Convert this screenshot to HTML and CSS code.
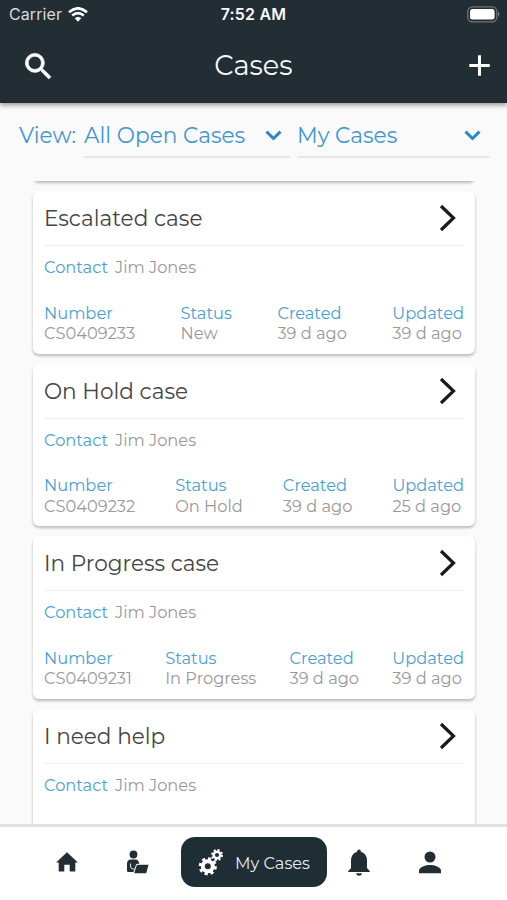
FILE: index.html
```html
<!DOCTYPE html>
<html lang="en">
<head>
<meta charset="utf-8">
<title>Cases</title>
<link rel="stylesheet" href="styles.css">
</head>
<body>
<div class="app">
  <header class="header">
    <div class="statusbar">
      <div class="carrier"><span>Carrier</span>
        <svg width="20" height="15" viewBox="0 0 20 15" fill="none" stroke="#fff" stroke-width="2.6"><path d="M1 5.2Q10-2.6 19 5.2M4.2 8.6Q10 3.7 15.8 8.6"/><path d="M6.7 11.2Q10 8.2 13.3 11.2L10 14.7Z" fill="#fff" stroke="none"/></svg>
      </div>
      <span class="time">7:52 AM</span>
      <svg class="battery" width="33" height="17" viewBox="0 0 33 17"><rect x=".8" y=".8" width="29" height="15" rx="4.5" fill="none" stroke="#6b7479" stroke-width="1.3"/><rect x="3" y="3" width="24.6" height="10.6" rx="2.4" fill="#fff"/><path d="M31 5.5q2.6 2.7 0 5.4z" fill="#7b8388"/></svg>
    </div>
    <div class="titlebar">
      <svg class="search" width="35" height="35" viewBox="0 0 24 24" fill="#fff" stroke="#fff" stroke-width=".5"><path d="M15.5 14h-.79l-.28-.27A6.47 6.47 0 0 0 16 9.5 6.5 6.5 0 1 0 9.5 16c1.61 0 3.09-.59 4.23-1.57l.27.28v.79l5 4.99L20.490 19l-4.990-5zm-6 0C7.010 14 5 11.990 5 9.500S7.010 5 9.500 5 14 7.010 14 9.500 11.990 14 9.500 14z"/></svg>
      <h1>Cases</h1>
      <svg class="plus" width="22" height="22" viewBox="0 0 22 22" stroke="#fff" stroke-width="3"><path d="M11.500 .3v20.400M1.300 10.500h20.400"/></svg>
    </div>
  </header>

  <div class="filters">
    <span class="view">View:</span>
    <div class="select open"><span>All Open Cases</span><svg width="17" height="11" viewBox="0 0 17 11"><path d="M1.500 1.700l7 6.800 7-6.800"/></svg></div>
    <div class="select mine"><span>My Cases</span><svg width="17" height="11" viewBox="0 0 17 11"><path d="M1.500 1.700l7 6.800 7-6.800"/></svg></div>
  </div>

  <main class="list">
    <div class="card tail"></div>
    <article class="card">
      <div class="head"><h2>Escalated case</h2><svg class="go" width="17" height="28" viewBox="0 0 17 28"><path d="M2 2l12.500 12L2 26"/></svg></div>
      <p class="contact"><b>Contact</b><span>Jim Jones</span></p>
      <div class="facts">
        <div><b>Number</b><span>CS0409233</span></div>
        <div><b>Status</b><span>New</span></div>
        <div><b>Created</b><span>39 d ago</span></div>
        <div><b>Updated</b><span>39 d ago</span></div>
      </div>
    </article>
    <article class="card">
      <div class="head"><h2>On Hold case</h2><svg class="go" width="17" height="28" viewBox="0 0 17 28"><path d="M2 2l12.500 12L2 26"/></svg></div>
      <p class="contact"><b>Contact</b><span>Jim Jones</span></p>
      <div class="facts">
        <div><b>Number</b><span>CS0409232</span></div>
        <div><b>Status</b><span>On Hold</span></div>
        <div><b>Created</b><span>39 d ago</span></div>
        <div><b>Updated</b><span>25 d ago</span></div>
      </div>
    </article>
    <article class="card">
      <div class="head"><h2>In Progress case</h2><svg class="go" width="17" height="28" viewBox="0 0 17 28"><path d="M2 2l12.500 12L2 26"/></svg></div>
      <p class="contact"><b>Contact</b><span>Jim Jones</span></p>
      <div class="facts">
        <div><b>Number</b><span>CS0409231</span></div>
        <div><b>Status</b><span>In Progress</span></div>
        <div><b>Created</b><span>39 d ago</span></div>
        <div><b>Updated</b><span>39 d ago</span></div>
      </div>
    </article>
    <article class="card">
      <div class="head"><h2>I need help</h2><svg class="go" width="17" height="28" viewBox="0 0 17 28"><path d="M2 2l12.500 12L2 26"/></svg></div>
      <p class="contact"><b>Contact</b><span>Jim Jones</span></p>
    </article>
  </main>

  <nav class="nav">
    <a class="item home"><svg width="22" height="20" viewBox="0 0 22 20"><path d="M11 .3L21.900 10.400H19.300V19.500h-5.600V12.800h-5.400v6.700H2.700V10.400H.1z"/></svg></a>
    <a class="item agent"><svg width="23" height="24" viewBox="0 0 23 24"><circle cx="7.500" cy="4.500" r="3.900"/><path d="M1 21V14q0-4.500 4-4.500h4.500q3.300 0 3.800 4.700H11L9 19.500l-1 2.500H2.500Q1 22 1 21z"/><path d="M10.800 14.800h11.700l-2.300 8.400H8.200z"/><path d="M4.600 13.500v3.700q.1 1.800 3.300 1.800M7.800 22.500l1.200-4 1.600-4.200h3" fill="none" stroke="#fff" stroke-width=".9"/></svg></a>
    <a class="active">
      <svg width="26" height="28" viewBox="0 0 26 28" fill="none" stroke="#fff"><circle cx="9.800" cy="18.300" r="5" stroke-width="4"/><circle cx="9.800" cy="18.300" r="7.700" stroke-width="2.800" stroke-dasharray="3.200 2.848"/><circle cx="19" cy="7" r="3.300" stroke-width="2.500"/><circle cx="19" cy="7" r="5" stroke-width="2" stroke-dasharray="2 1.927"/></svg>
      <span>My Cases</span></a>
    <a class="item bell"><svg width="22" height="27" viewBox="0 0 22 27"><path d="M11 .5q1.800 0 2 2.200Q19 4.500 19 12v7l2.800 3.300v.7H.2v-.7L3 19v-7Q3 4.500 9 2.700 9.200.500 11 .500zM8 24.300h6Q13.500 26.800 11 26.800T8 24.300z"/></svg></a>
    <a class="item person"><svg width="22" height="23" viewBox="0 0 22 23"><circle cx="11" cy="6" r="5.500"/><path d="M0 22.300V19.500C0 16 7 14 11 14s11 2 11 5.500v2.800z"/></svg></a>
  </nav>
</div>
</body>
</html>
```
FILE: styles.css
```css
* { box-sizing: border-box; }
body { margin: 0; font-family: Montserrat, Inter, sans-serif; background: #fafafa; }
h1, h2, p { margin: 0; font-weight: 400; }
svg { display: block; flex: none; }
.app { width: 507px; height: 900px; display: flex; flex-direction: column; overflow: hidden; }

.header { height: 103px; flex: none; background: #222d34; color: #f5f9fc; box-shadow: 0 2px 5px rgba(0,0,0,.42); z-index: 1; }
.statusbar { height: 29px; display: grid; grid-template-columns: 1fr auto 1fr; align-items: center; padding: 0 7px 0 9px; font-family: Inter, sans-serif; font-size: 16px; }
.carrier { display: flex; gap: 6px; align-items: center; color: #d5dade; letter-spacing: .1px; }
.carrier span, .time { padding-bottom: 1px; }
.time { font-weight: 600; letter-spacing: .2px; margin-right: 2px; }
.battery { justify-self: end; }
.titlebar { height: 74px; display: grid; grid-template-columns: 1fr auto 1fr; align-items: center; padding: 0 17px 0 21px; }
.titlebar h1 { font-size: 27.3px; line-height: 74px; margin-right: 4px; }
.plus { justify-self: end; }

.filters { height: 78px; flex: none; display: flex; align-items: flex-start; padding: 9px 17px 0 19px; color: #4296ce; font-size: 21.65px; line-height: 46px; }
.view { width: 65px; }
.select { height: 46px; display: flex; justify-content: space-between; align-items: flex-start; border-bottom: 2px solid #e6e6e6; }
.select svg { fill: none; stroke: #2c88c5; stroke-width: 3; margin-top: 18px; }
.open { width: 206px; padding-right: 8px; }
.mine { width: 192px; margin-left: 7px; padding: 0 8px 0 0; }

.list { height: 643px; flex: none; overflow: hidden; padding: 0 32px 0 33px; display: flex; flex-direction: column; gap: 10px; }
.card { height: 162.7px; flex: none; background: #fff; border-radius: 6px; padding: 0 11px; box-shadow: 0 2px 3px rgba(0,0,0,.26); }
.tail { height: 100px; margin-top: -100px; }
.head { height: 55px; display: flex; justify-content: space-between; align-items: center; border-bottom: 1px solid #eee; padding-right: 8px; }
.head h2 { font-size: 21.6px; line-height: 30px; color: #454545; }
.go { fill: none; stroke: #1a1a1a; stroke-width: 3.2; }
.contact, .facts { font-size: 16.25px; line-height: 20.5px; color: #999; }
.contact { padding-top: 11px; display: flex; gap: 7px; }
.card b { font-weight: 400; color: #4aa0d2; }
.facts { display: flex; justify-content: space-between; padding-top: 25px; }
.facts b, .facts span { display: block; }

.nav { height: 76px; flex: none; background: #fff; border-top: 3px solid #e0e0e0; display: flex; align-items: center; padding: 0 0 3px 31px; fill: #222d34; }
.item { display: flex; justify-content: center; flex: none; }
.home { width: 71px; }
.agent { width: 71px; margin-right: 8px; }
.bell { width: 64px; }
.person { width: 78px; }
.active { width: 146px; height: 50px; flex: none; border-radius: 14px; background: #1f2d35; display: flex; align-items: center; gap: 11px; padding-left: 17px; color: #e5ecf0; font-size: 16.2px; }
.active span { padding-top: 1px; }
```
